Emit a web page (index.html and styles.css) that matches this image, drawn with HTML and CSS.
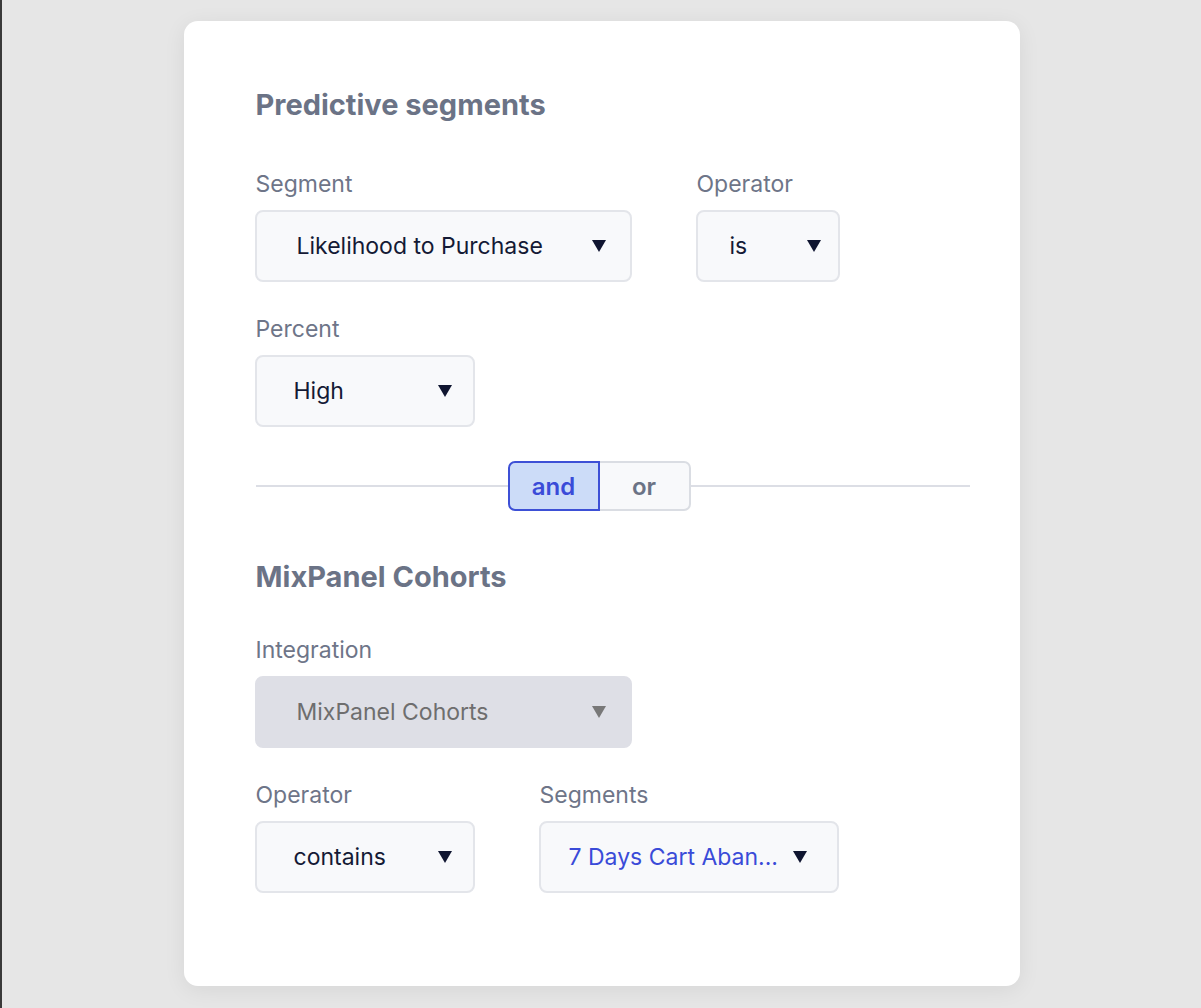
FILE: index.html
```html
<!DOCTYPE html>
<html lang="en">
<head>
<meta charset="utf-8">
<title>Segments</title>
<link rel="stylesheet" href="styles.css">
</head>
<body>
<div class="card">
  <h2 class="heading">Predictive segments</h2>
  <div class="row first">
    <div class="field">
      <div class="label">Segment</div>
      <div class="select w-segment">
        <span class="value">Likelihood to Purchase</span>
        <svg class="arrow" width="14" height="12" viewBox="0 0 14 12"><polygon points="0,0 14,0 7,12"/></svg>
      </div>
    </div>
    <div class="field">
      <div class="label">Operator</div>
      <div class="select w-op">
        <span class="value">is</span>
        <svg class="arrow" width="14" height="12" viewBox="0 0 14 12"><polygon points="0,0 14,0 7,12"/></svg>
      </div>
    </div>
  </div>
  <div class="row">
    <div class="field">
      <div class="label">Percent</div>
      <div class="select w-small">
        <span class="value">High</span>
        <svg class="arrow" width="14" height="12" viewBox="0 0 14 12"><polygon points="0,0 14,0 7,12"/></svg>
      </div>
    </div>
  </div>

  <div class="divider">
    <span class="line left"></span>
    <div class="toggle">
      <span class="opt active">and</span>
      <span class="opt">or</span>
    </div>
    <span class="line right"></span>
  </div>

  <h2 class="heading second">MixPanel Cohorts</h2>
  <div class="row first2">
    <div class="field">
      <div class="label">Integration</div>
      <div class="select w-segment disabled">
        <span class="value">MixPanel Cohorts</span>
        <svg class="arrow" width="14" height="12" viewBox="0 0 14 12"><polygon points="0,0 14,0 7,12"/></svg>
      </div>
    </div>
  </div>
  <div class="row">
    <div class="field">
      <div class="label">Operator</div>
      <div class="select w-small">
        <span class="value">contains</span>
        <svg class="arrow" width="14" height="12" viewBox="0 0 14 12"><polygon points="0,0 14,0 7,12"/></svg>
      </div>
    </div>
    <div class="field">
      <div class="label">Segments</div>
      <div class="select w-seg2">
        <span class="value blue">7 Days Cart Aban...</span>
        <svg class="arrow" width="14" height="12" viewBox="0 0 14 12"><polygon points="0,0 14,0 7,12"/></svg>
      </div>
    </div>
  </div>
</div>
</body>
</html>
```
FILE: styles.css
```css
html, body {
  margin: 0;
  padding: 0;
}
body {
  background: #e6e6e6;
  border-left: 2px solid #3a3a3a;
  min-height: 1008px;
  box-sizing: border-box;
  font-family: Inter, "Noto Sans", sans-serif;
  padding-top: 21px;
}
.card {
  width: 836px;
  height: 965px;
  box-sizing: border-box;
  margin: 0 auto;
  background: #ffffff;
  border-radius: 14px;
  box-shadow: 0 4px 22px rgba(0, 0, 0, 0.07);
  padding: 66px 50px 0 72px;
}
.heading {
  margin: 0;
  font-size: 29px;
  line-height: 36px;
  font-weight: 700;
  color: #6b7386;
}
.heading.second {
  margin-top: 48px;
}
.row {
  display: flex;
  gap: 64px;
  margin-top: 33px;
  margin-left: -1px;
}
.row.first {
  margin-top: 47px;
}
.row.first2 {
  margin-top: 41px;
}
.field {
  display: flex;
  flex-direction: column;
}
.label {
  font-size: 23px;
  line-height: 28px;
  color: #6e7588;
  margin-left: 1px;
  margin-bottom: 12px;
}
.select {
  height: 72px;
  box-sizing: border-box;
  border: 2px solid #e3e5ea;
  border-radius: 8px;
  background: #f8f9fb;
  display: flex;
  align-items: center;
  justify-content: space-between;
  padding: 0 24px 0 37px;
  font-size: 23px;
  color: #141a35;
}
.select .arrow {
  fill: #0f1530;
  flex: none;
}
.w-segment { width: 377px; padding-left: 40px; }
.w-op { width: 144px; padding-left: 32px; padding-right: 17px; }
.w-small { width: 220px; padding-right: 21px; }
.w-seg2 { width: 300px; padding-left: 28px; padding-right: 30px; }
.select.disabled {
  background: #dedfe6;
  border-color: #dedfe6;
  color: #6e6e6e;
}
.select.disabled .arrow {
  fill: #787878;
}
.value.blue {
  color: #3a4bd8;
}
.divider {
  display: flex;
  align-items: center;
  margin-top: 34px;
}
.line {
  height: 2px;
  background: #dcdee5;
}
.line.left {
  width: 252px;
}
.line.right {
  flex: 1;
}
.toggle {
  display: flex;
  height: 50px;
}
.opt {
  display: flex;
  align-items: center;
  justify-content: center;
  box-sizing: border-box;
  font-size: 24px;
  font-weight: 600;
  height: 50px;
}
.opt.active {
  width: 92px;
  background: #ccdcf8;
  border: 2px solid #3d50d6;
  border-radius: 7px 0 0 7px;
  color: #3a4bd8;
}
.opt:not(.active) {
  width: 91px;
  background: #f8f9fb;
  border: 2px solid #dadde3;
  border-left: none;
  border-radius: 0 7px 7px 0;
  color: #6b7386;
}
```
